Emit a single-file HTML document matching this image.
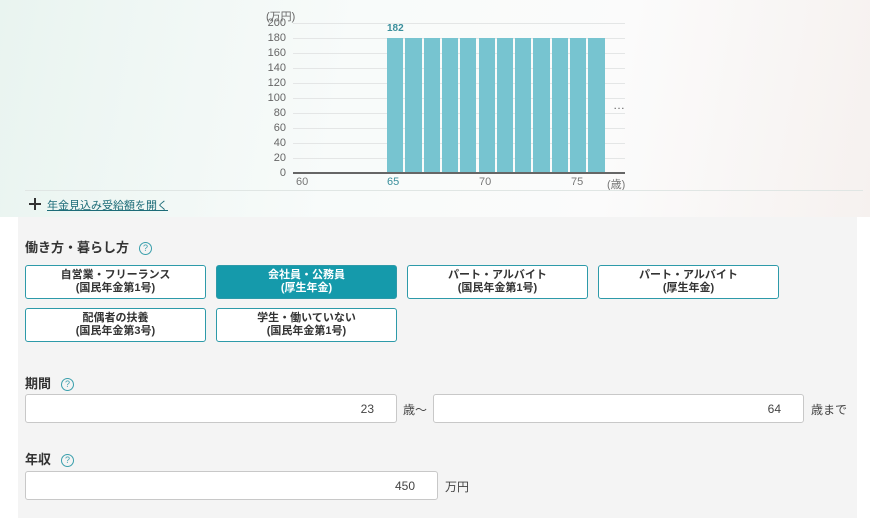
<!DOCTYPE html>
<html><head><meta charset="utf-8"><style>
*{margin:0;padding:0;box-sizing:border-box}
body{width:870px;height:518px;overflow:hidden;position:relative;font-family:"Liberation Sans","Noto Sans CJK JP",sans-serif;background:#fff;color:#333}
.top{position:absolute;left:0;top:0;width:870px;height:217px;background:linear-gradient(100deg,#e9f4f0 0%,#f8fbfa 40%,#fbfbfb 70%,#f6f1ef 100%)}
.a{position:absolute}
.yl{position:absolute;right:584px;font-size:11px;color:#666;line-height:12px}
.grid{position:absolute;left:293px;width:332px;height:1px;background:#e4e6e6}
.bar{position:absolute;top:38px;height:135px;width:16.3px;background:#77c4d0}
.xl{position:absolute;top:176px;font-size:11px;color:#777}
.panel{position:absolute;left:18px;top:217px;width:839px;height:301px;background:#f4f4f4}
.lbl{position:absolute;font-size:13px;font-weight:bold;color:#333}
.q{display:inline-block;width:13px;height:13px;border:1px solid #3a9fac;border-radius:50%;color:#3a9fac;font-size:9px;line-height:11px;text-align:center;font-weight:normal;vertical-align:1px;margin-left:10px}
.btn{position:absolute;width:181px;height:34px;border:1px solid #2d9aa9;border-radius:3px;background:#fff;color:#333;font-size:11px;font-weight:bold;text-align:center;line-height:13px;padding-top:3px}
.btn.on{background:#159aab;color:#fff}
.inp{position:absolute;height:29px;border:1px solid #c8c8c8;border-radius:3px;background:#fff;text-align:right;font-size:12px;line-height:29px;padding-right:22px;color:#444}
.u{position:absolute;font-size:12px;color:#444}
</style></head><body>
<div class="top"></div>
<div class="a" style="left:266px;top:8px;font-size:11px;color:#666">(万円)</div>
<div class="yl" style="top:17px">200</div>
<div class="yl" style="top:32px">180</div>
<div class="yl" style="top:47px">160</div>
<div class="yl" style="top:62px">140</div>
<div class="yl" style="top:77px">120</div>
<div class="yl" style="top:92px">100</div>
<div class="yl" style="top:107px">80</div>
<div class="yl" style="top:122px">60</div>
<div class="yl" style="top:137px">40</div>
<div class="yl" style="top:152px">20</div>
<div class="yl" style="top:167px">0</div>
<div class="grid" style="top:23px"></div><div class="grid" style="top:38px"></div><div class="grid" style="top:53px"></div><div class="grid" style="top:68px"></div><div class="grid" style="top:83px"></div><div class="grid" style="top:98px"></div><div class="grid" style="top:113px"></div><div class="grid" style="top:128px"></div><div class="grid" style="top:143px"></div><div class="grid" style="top:158px"></div>
<div class="bar" style="left:387px"></div><div class="bar" style="left:405.3px"></div><div class="bar" style="left:423.6px"></div><div class="bar" style="left:441.9px"></div><div class="bar" style="left:460.2px"></div><div class="bar" style="left:478.5px"></div><div class="bar" style="left:496.8px"></div><div class="bar" style="left:515.1px"></div><div class="bar" style="left:533.4px"></div><div class="bar" style="left:551.7px"></div><div class="bar" style="left:570px"></div><div class="bar" style="left:588.3px"></div>
<div class="a" style="left:293px;top:172px;width:332px;height:2px;background:#666"></div>
<div class="a" style="left:387px;top:23px;font-size:10px;color:#3a8f9c;font-weight:bold">182</div>
<div class="a" style="left:613px;top:98px;font-size:12px;color:#666">…</div>
<div class="xl" style="left:296px">60</div>
<div class="xl" style="left:387px;color:#3a8f9c">65</div>
<div class="xl" style="left:479px">70</div>
<div class="xl" style="left:571px">75</div>
<div class="xl" style="left:607px">(歳)</div>
<div class="a" style="left:25px;top:190px;width:838px;height:1px;background:#e0e6e4"></div>
<div class="a" style="left:29px;top:203px;width:12px;height:1.5px;background:#333"></div>
<div class="a" style="left:34.3px;top:197.5px;width:1.5px;height:12px;background:#333"></div>
<div class="a" style="left:47px;top:197px;font-size:11px;color:#1c6c78;text-decoration:underline">年金見込み受給額を開く</div>
<div class="panel"></div>
<div class="lbl" style="left:25px;top:237px">働き方・暮らし方<span class="q">?</span></div>
<div class="btn" style="left:25px;top:265px">自営業・フリーランス<br>(国民年金第1号)</div>
<div class="btn on" style="left:216px;top:265px">会社員・公務員<br>(厚生年金)</div>
<div class="btn" style="left:407px;top:265px">パート・アルバイト<br>(国民年金第1号)</div>
<div class="btn" style="left:598px;top:265px">パート・アルバイト<br>(厚生年金)</div>
<div class="btn" style="left:25px;top:308px">配偶者の扶養<br>(国民年金第3号)</div>
<div class="btn" style="left:216px;top:308px">学生・働いていない<br>(国民年金第1号)</div>
<div class="lbl" style="left:25px;top:373px">期間<span class="q">?</span></div>
<div class="inp" style="left:25px;top:394px;width:372px">23</div>
<div class="u" style="left:403px;top:401px">歳〜</div>
<div class="inp" style="left:433px;top:394px;width:371px">64</div>
<div class="u" style="left:811px;top:401px">歳まで</div>
<div class="lbl" style="left:25px;top:449px">年収<span class="q">?</span></div>
<div class="inp" style="left:25px;top:471px;width:413px">450</div>
<div class="u" style="left:445px;top:478px">万円</div>
</body></html>
